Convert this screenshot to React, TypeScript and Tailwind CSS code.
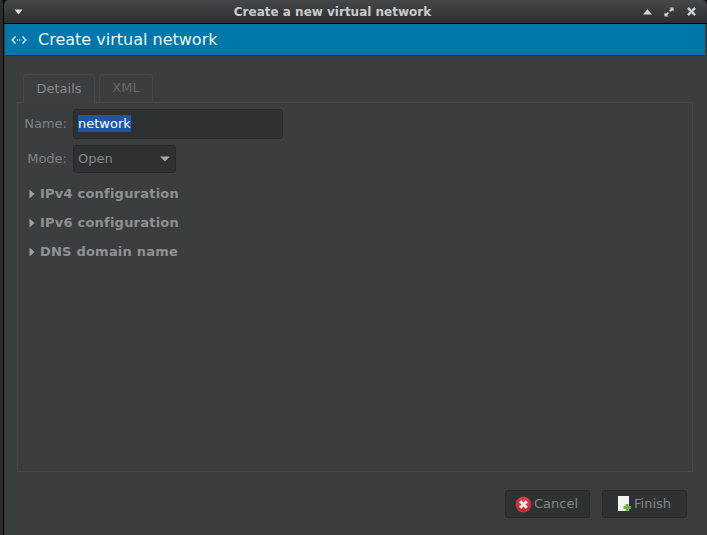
const font = { fontFamily: '"DejaVu Sans", sans-serif' };

function NetworkIcon() {
  return (
    <svg width="16" height="12" viewBox="0 0 16 12" fill="none" stroke="#d5e6f0" strokeWidth="1.5">
      <path d="M4.5 2.5 L1.2 6 L4.5 9.5" />
      <path d="M11.5 2.5 L14.8 6 L11.5 9.5" />
      <path d="M5.8 6 H10.4" strokeDasharray="1.2 0.9" />
    </svg>
  );
}

function Expander({ label }: { label: string }) {
  return (
    <div className="flex items-center h-[29px]">
      <svg width="6" height="10" viewBox="0 0 6 10" className="mr-[5px]">
        <path d="M0.5 0.5 L5.5 5 L0.5 9.5 Z" fill="#a0a3a3" />
      </svg>
      <span className="text-[13px] font-bold text-[#8f9292] tracking-[0.22px]">{label}</span>
    </div>
  );
}

function CancelIcon() {
  return (
    <svg width="17" height="17" viewBox="0 0 17 17" className="shrink-0">
      <circle cx="8.5" cy="8.5" r="8" fill="#c42f3a" />
      <circle cx="8.5" cy="7" r="6" fill="#e0525a" opacity="0.5" />
      <path d="M5.2 5.2 L11.8 11.8 M11.8 5.2 L5.2 11.8" stroke="#f6eaea" strokeWidth="2.8" />
    </svg>
  );
}

function FinishIcon() {
  return (
    <svg width="16" height="16" viewBox="0 0 16 16" className="shrink-0">
      <path d="M0 0 H11 V15 H0 Z" fill="#f4f4f4" />
      <path d="M7.6 8 V10 H5.5 V13 H7.6 V15 H10.6 V13 H13 V10 H10.6 V8 Z" fill="#6cb33f" />
    </svg>
  );
}

function WindowButtons() {
  return (
    <div className="flex items-center mr-[11px]">
      <svg width="9" height="6" viewBox="0 0 9 6" className="mt-[1px]">
        <path d="M4.5 0.3 L9 5.5 H0 Z" fill="#d8d8d8" />
      </svg>
      <svg width="10" height="10" viewBox="0 0 12 12" fill="#d0d0d0" className="ml-[12px]">
        <path d="M6.5 0.5 H11.5 V5.5 L9.8 3.8 L7.6 6 L6 4.4 L8.2 2.2 Z" />
        <path d="M0.5 6.5 V11.5 H5.5 L3.8 9.8 L6 7.6 L4.4 6 L2.2 8.2 Z" />
      </svg>
      <svg width="9" height="9" viewBox="0 0 10 10" className="ml-[13px]">
        <path d="M1 1 L9 9 M9 1 L1 9" stroke="#d0d0d0" strokeWidth="2.6" />
      </svg>
    </div>
  );
}

export default function App() {
  return (
    <div className="w-[707px] h-[535px] flex bg-[#111] overflow-hidden" style={font}>
      <div className="w-[3px] shrink-0 bg-[#2a2c2e]" />
      <div className="w-px shrink-0 bg-black" />
      <div className="flex-1 flex flex-col min-w-0">
        {/* Title bar */}
        <div className="h-[24px] shrink-0 flex items-center justify-between rounded-t-[5px] bg-gradient-to-b from-[#45484a] to-[#2c2e30] border-b border-black">
          <svg width="9" height="6" viewBox="0 0 9 6" className="ml-[10px]">
            <path d="M0.5 0.5 H8.5 L4.5 5.5 Z" fill="#dcdcdc" />
          </svg>
          <span className="text-[12px] font-bold text-[#c9cbcb] mr-[1px] mt-[1px]">
            Create a new virtual network
          </span>
          <WindowButtons />
        </div>

        <div className="flex-1 flex flex-col min-h-0 bg-[#3a3e3f] pl-px pr-[2px]">
          {/* Banner */}
          <div className="h-[32px] shrink-0 flex items-center bg-[#0077aa] border-b border-[#2b3234] pl-[6px] text-white">
            <NetworkIcon />
            <span className="ml-[11px] text-[16px] text-[#eef6fa]">Create virtual network</span>
          </div>

          <div className="flex-1 flex flex-col px-[12px] pt-[18px] pb-[17px] min-h-0">
            {/* Tabs */}
            <div className="flex gap-[4px] pl-[6px] text-[13px] h-[28px] shrink-0">
              <div className="w-[72px] h-[29px] flex items-center justify-center rounded-t-[4px] border border-b-0 border-[#444849] bg-[#3b3f40] text-[#888b8b] relative z-10">
                Details
              </div>
              <div className="w-[54px] h-[28px] flex items-center justify-center rounded-t-[4px] border border-b-0 border-[#444849] pb-[1px] text-[#666a6a]">
                XML
              </div>
            </div>

            {/* Tab panel */}
            <div className="flex-1 border border-[#444849] pl-[1px] pt-[6px]">
              <div className="flex items-center h-[30px] text-[13px]">
                <span className="w-[48px] text-right text-[#7f8383]">Name:</span>
                <div className="ml-[6px] w-[210px] h-[30px] flex items-center rounded-[3px] border border-[#272a2a] bg-[#2e3131] pl-[4px] pb-[1px]">
                  <span className="bg-[#1c56a6] text-white h-[17px] leading-[17px]">network</span>
                </div>
              </div>
              <div className="flex items-center h-[28px] mt-[6px] text-[13px]">
                <span className="w-[48px] text-right text-[#7f8383]">Mode:</span>
                <div className="ml-[6px] w-[103px] h-[28px] flex items-center justify-between rounded-[3px] border border-[#272a2a] bg-[#2e3131] pl-[4px] pr-[5px] text-[#858888]">
                  <span>Open</span>
                  <svg width="10" height="6" viewBox="0 0 10 6">
                    <path d="M0 0.5 H10 L5 5.5 Z" fill="#a5a8a8" />
                  </svg>
                </div>
              </div>
              <div className="mt-[6px] pl-[10px] flex flex-col">
                <Expander label="IPv4 configuration" />
                <Expander label="IPv6 configuration" />
                <Expander label="DNS domain name" />
              </div>
            </div>

            {/* Actions */}
            <div className="flex justify-end gap-[12px] mt-[18px] mr-[6px] h-[28px] shrink-0 text-[13px] text-[#858888]">
              <button className="w-[85px] h-[28px] flex items-center pl-[9px] gap-[2px] rounded-[3px] border border-[#272a2a] bg-[#2e3232]">
                <CancelIcon />
                Cancel
              </button>
              <button className="w-[85px] h-[28px] flex items-center pl-[15px] rounded-[3px] border border-[#272a2a] bg-[#2e3232]">
                <FinishIcon />
                Finish
              </button>
            </div>
          </div>
        </div>
      </div>
    </div>
  );
}
